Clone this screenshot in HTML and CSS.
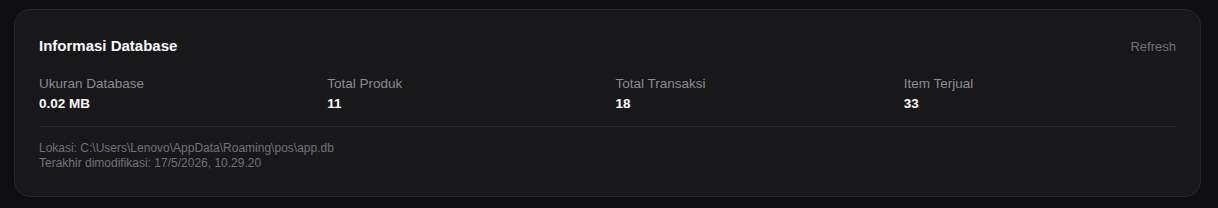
FILE: index.html
```html
<!DOCTYPE html>
<html lang="id">
<head>
  <meta charset="UTF-8">
  <meta name="viewport" content="width=device-width, initial-scale=1.0">
  <title>Informasi Database</title>
  <link rel="stylesheet" href="styles.css">
</head>
<body>
  <div class="page">
    <!-- Database info card -->
    <div class="card">
      <div class="card-header">
        <h2>Informasi Database</h2>
        <button class="refresh-btn">Refresh</button>
      </div>

      <div class="stats">
        <div class="stat">
          <p class="stat-label">Ukuran Database</p>
          <p class="stat-value">0.02 MB</p>
        </div>
        <div class="stat">
          <p class="stat-label">Total Produk</p>
          <p class="stat-value">11</p>
        </div>
        <div class="stat">
          <p class="stat-label">Total Transaksi</p>
          <p class="stat-value">18</p>
        </div>
        <div class="stat">
          <p class="stat-label">Item Terjual</p>
          <p class="stat-value">33</p>
        </div>
      </div>

      <div class="card-footer">
        <p>Lokasi: C:\Users\Lenovo\AppData\Roaming\pos\app.db</p>
        <p>Terakhir dimodifikasi: 17/5/2026, 10.29.20</p>
      </div>
    </div>
  </div>
</body>
</html>
```

FILE: styles.css
```css
/* Dark page */
body {
  margin: 0;
  font-family: "Liberation Sans", Arial, sans-serif;
  background-color: #0f0f12;
  color: #fafafa;
}
.page {
  padding: 9px 17px 12px 14px;
}
/* Card */
.card {
  background-color: #18181b;
  border: 1px solid #27272a;
  border-radius: 16px;
  padding: 24px 24px 25px;
}
.card-header {
  display: flex;
  justify-content: space-between;
  align-items: center;
  margin-bottom: 16px;
}
.card-header h2 {
  margin: 0;
  font-size: 15px;
  line-height: 24px;
  font-weight: bold;
  color: #fafafa;
}
.refresh-btn {
  background: none;
  border: none;
  padding: 0;
  font-family: inherit;
  font-size: 13px;
  color: #71717a;
  cursor: pointer;
}
/* Stats grid */
.stats {
  display: grid;
  grid-template-columns: repeat(4, 1fr);
  gap: 16px;
}
.stat p {
  margin: 0;
}
.stat-label {
  font-size: 13.5px;
  line-height: 20px;
  color: #8b8b93;
}
.stat-value {
  font-size: 13.5px;
  line-height: 20px;
  font-weight: bold;
  color: #fafafa;
}
/* Footer */
.card-footer {
  margin-top: 12px;
  padding-top: 14px;
  border-top: 1px solid #27272a;
}
.card-footer p {
  margin: 0;
  font-size: 12px;
  line-height: 15px;
  color: #71717a;
}
```
